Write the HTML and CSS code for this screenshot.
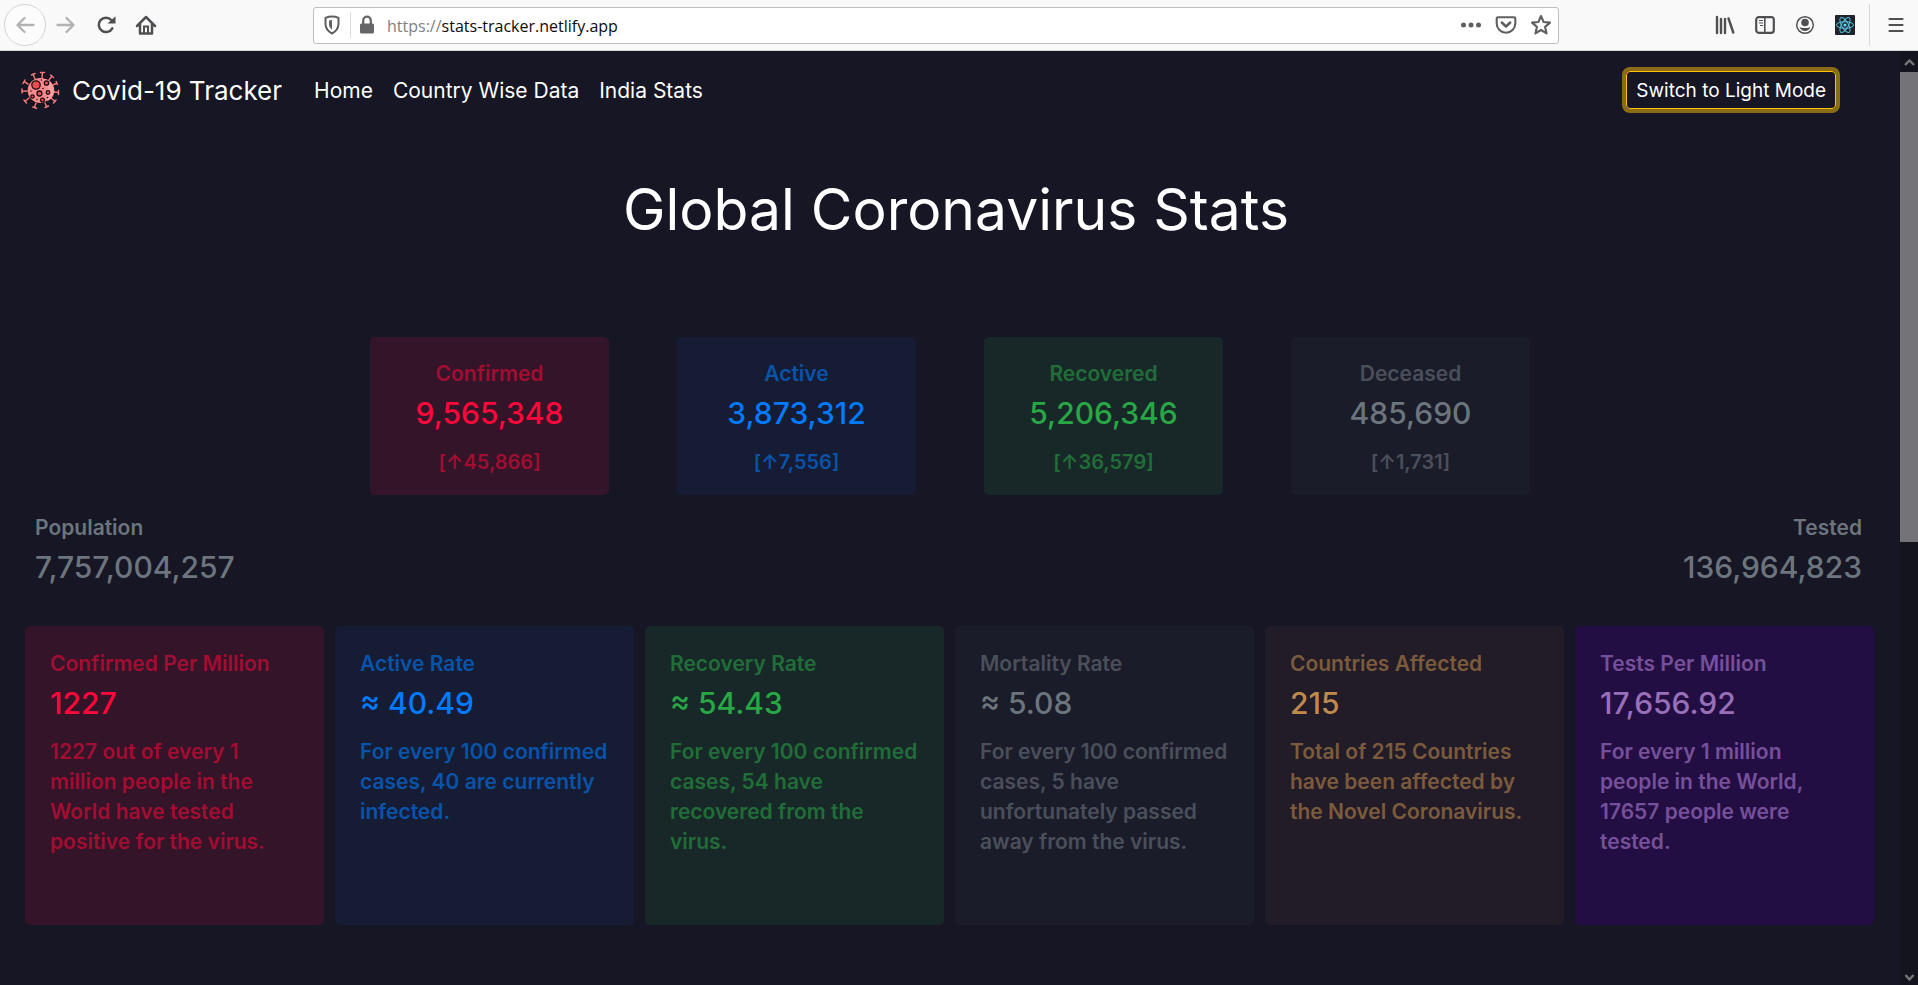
FILE: index.html
```html
<!DOCTYPE html>
<html lang="en">
<head>
<meta charset="utf-8">
<title>Covid-19 Tracker</title>
<link rel="stylesheet" href="styles.css">
</head>
<body>
<header class="toolbar">
  <div class="toolbar-left">
    <button class="tool back" aria-label="Back"><svg width="20" height="20" viewBox="0 0 20 20"><path d="M18.500 10H3M9.500 3L2.500 10l7 7" fill="none" stroke="#b2b2b3" stroke-width="2.300" stroke-linecap="round" stroke-linejoin="round"/></svg></button>
    <button class="tool" aria-label="Forward"><svg width="20" height="20" viewBox="0 0 20 20"><path d="M1.500 10H17M10.500 3l7 7-7 7" fill="none" stroke="#b2b2b3" stroke-width="2.300" stroke-linecap="round" stroke-linejoin="round"/></svg></button>
    <button class="tool" aria-label="Reload"><svg width="20" height="20" viewBox="0 0 20 20"><path d="M16.300 13.300A7.200 7.200 0 1 1 15.300 5" fill="none" stroke="#505052" stroke-width="2.500" stroke-linecap="round"/><path d="M19.500 1.300v7.200h-8z" fill="#505052"/></svg></button>
    <button class="tool" aria-label="Home"><svg width="22" height="22" viewBox="0 0 22 22"><path d="M2 12L11 3l9 9M5 10v9.500h12V10" fill="none" stroke="#505052" stroke-width="2.500" stroke-linecap="round" stroke-linejoin="round"/><path d="M9 19v-6.500h4V19" fill="none" stroke="#505052" stroke-width="2"/></svg></button>
  </div>
  <div class="urlbar">
    <svg class="shield" width="18" height="20" viewBox="0 0 18 20"><path d="M9 1.500c2.600 0 4.700.5 6.500 1.300v6c0 4.500-2.600 7.700-6.500 9.700-3.900-2-6.500-5.200-6.500-9.700v-6C4.300 2 6.400 1.500 9 1.500z" fill="none" stroke="#5f5f61" stroke-width="2"/><path d="M9 5c-1.200 0-2.200.2-3 .5v3.600c0 2.400 1.200 4.400 3 5.700z" fill="#5f5f61"/></svg>
    <span class="url-rule"></span>
    <svg class="lock" width="16" height="20" viewBox="0 0 16 20"><path d="M4.200 9V5.500a3.800 3.800 0 0 1 7.600 0V9" fill="none" stroke="#666668" stroke-width="2.300"/><rect x="1" y="8.500" width="14" height="10" rx="1.500" fill="#666668"/></svg>
    <label class="scheme" for="url">https://</label><input class="url" id="url" type="text" value="stats-tracker.netlify.app">
    <div class="url-actions">
      <button class="tool" aria-label="Page actions"><svg width="22" height="20" viewBox="0 0 22 20"><g fill="#5f5f61"><circle cx="3.500" cy="10" r="2.500"/><circle cx="11" cy="10" r="2.500"/><circle cx="18.500" cy="10" r="2.500"/></g></svg></button>
      <button class="tool" aria-label="Save to Pocket"><svg width="22" height="20" viewBox="0 0 22 20"><path d="M3 2.200h16q1.300 0 1.300 1.300V8.500a9.300 9.300 0 0 1-18.600 0V3.500Q1.700 2.200 3 2.200z" fill="none" stroke="#5f5f61" stroke-width="2.100"/><path d="M6.800 7.500L11 11.500l4.200-4" fill="none" stroke="#5f5f61" stroke-width="2.500" stroke-linecap="round" stroke-linejoin="round"/></svg></button>
      <button class="tool" aria-label="Bookmark this page"><svg width="22" height="22" viewBox="0 0 22 22"><path d="M11 2l2.600 6 6.400.6-4.900 4.300 1.500 6.500L11 16l-5.600 3.400 1.500-6.500L2 8.600 8.400 8z" fill="none" stroke="#5f5f61" stroke-width="2.100" stroke-linejoin="round"/></svg></button>
    </div>
  </div>
  <div class="toolbar-right">
    <button class="tool" aria-label="Library"><svg width="20" height="20" viewBox="0 0 20 20"><path d="M2 2v16M6 4v14M10 4v14M13.500 3.500L18.300 17.500" fill="none" stroke="#505052" stroke-width="2.400" stroke-linecap="round"/></svg></button>
    <button class="tool" aria-label="Sidebars"><svg width="20" height="20" viewBox="0 0 20 20"><rect x="1.200" y="2.200" width="17.600" height="15.600" rx="2.500" fill="none" stroke="#505052" stroke-width="2.200"/><path d="M9.800 3v14" stroke="#505052" stroke-width="1.600"/><path d="M4 5.500h4M4 8h4M5 10.500h3" stroke="#505052" stroke-width="1.200"/></svg></button>
    <button class="tool" aria-label="Account"><svg width="20" height="20" viewBox="0 0 20 20"><circle cx="10" cy="10" r="8.300" fill="none" stroke="#505052" stroke-width="1.500"/><circle cx="10" cy="7.500" r="3.800" fill="#505052"/><path d="M4.500 11.800c1.200 1 3 1.300 5.500 1.300s4.300-.3 5.500-1.300c-.6 2.500-2.800 4.200-5.500 4.200s-4.900-1.700-5.500-4.200z" fill="#505052"/></svg></button>
    <button class="tool" aria-label="React Developer Tools"><svg width="20" height="20" viewBox="0 0 20 20"><rect width="20" height="20" rx="1" fill="#20232a"/><g fill="none" stroke="#61dafb" stroke-opacity=".85"><ellipse cx="10" cy="10" rx="8.500" ry="3.300"/><ellipse cx="10" cy="10" rx="8.500" ry="3.300" transform="rotate(60 10 10)"/><ellipse cx="10" cy="10" rx="8.500" ry="3.300" transform="rotate(120 10 10)"/></g><circle cx="10" cy="10" r="1.600" fill="#61dafb"/></svg></button>
    <span class="toolbar-rule"></span>
    <button class="tool" aria-label="Open menu"><svg width="18" height="18" viewBox="0 0 18 18"><path d="M2.500 3h13M2.500 9h13M2.500 15h13" stroke="#505052" stroke-width="2.200" stroke-linecap="round"/></svg></button>
  </div>
</header>

<div class="viewport">
  <div class="page">
    <nav class="navbar">
      <a class="brand" href="#">
        <svg width="40" height="40" viewBox="0 0 40 40">
          <g stroke="#0d0d14" stroke-width="3.500" stroke-linecap="round" fill="none">
            <path d="M20 20L22 3M20 20L31.500 6.500M20 20L36.500 13.500M20 20L38 22.500M20 20L34.500 31M20 20L26.500 36.500M20 20L14.500 37M20 20L5.500 31.500M20 20L2.500 21M20 20L4.500 11.500M20 20L13 4"/>
          </g>
          <circle cx="20" cy="20.500" r="13" fill="#f78a8c" stroke="#0d0d14" stroke-width="1.200"/>
          <g stroke="#f3797c" stroke-width="1.500" stroke-linecap="round" fill="none">
            <path d="M22 8L22.400 3M20.500 2.500h4M29 10l3-4M30.500 5l3 2.500M33 15l4-2M36.200 11.500l1.200 3M34 22l4 .5M38.500 20.500v4M31 28l4 3.500M33.500 33l2.500-3M25 33l1.700 4M25 37.500l3.500-1.500M16 33l-1.500 4.500M12.800 37l3.700 1.300M9 28l-4 3.500M4 30l2.500 3M7 21l-4.500.2M2 19v4M8 14l-4-2.500M3 13.500l2-3.500M15 9L13 4M11.500 5l3.500-1.500"/>
          </g>
          <path d="M21 8.500a12 12 0 0 1 6 23q6-13-6-23z" fill="#fb9d9e"/>
          <g fill="#ee4c4c" stroke="#1c0d14" stroke-width="1.300"><circle cx="16" cy="15" r="4.200"/><circle cx="26.500" cy="13" r="2.200"/><circle cx="19.500" cy="23.500" r="2.500"/><circle cx="28" cy="22.500" r="1.800"/><circle cx="12.500" cy="26.500" r="1.700"/><circle cx="22.500" cy="30" r="1.900"/></g>
          <g fill="#1c0d14"><circle cx="21.500" cy="10" r=".8"/><circle cx="23" cy="18.500" r=".8"/><circle cx="11" cy="21" r=".8"/><circle cx="27.500" cy="27.500" r=".8"/><circle cx="17" cy="29.500" r=".7"/></g>
        </svg>
        <span>Covid-19 Tracker</span>
      </a>
      <div class="nav-links">
        <a href="#">Home</a>
        <a href="#">Country Wise Data</a>
        <a href="#">India Stats</a>
      </div>
      <button class="mode">Switch to Light Mode</button>
    </nav>

    <main>
      <h1>Global Coronavirus Stats</h1>
      <section class="totals">
        <article class="card total red"><h2>Confirmed</h2><p class="value">9,565,348</p><p class="delta">[↑45,866]</p></article>
        <article class="card total blue"><h2>Active</h2><p class="value">3,873,312</p><p class="delta">[↑7,556]</p></article>
        <article class="card total green"><h2>Recovered</h2><p class="value">5,206,346</p><p class="delta">[↑36,579]</p></article>
        <article class="card total gray"><h2>Deceased</h2><p class="value">485,690</p><p class="delta">[↑1,731]</p></article>
      </section>
      <section class="world">
        <div><h2>Population</h2><p class="value">7,757,004,257</p></div>
        <div class="tested"><h2>Tested</h2><p class="value">136,964,823</p></div>
      </section>
      <section class="rates">
        <article class="card rate red"><h2>Confirmed Per Million</h2><p class="value">1227</p><p class="note">1227 out of every 1 million people in the World have tested positive for the virus.</p></article>
        <article class="card rate blue"><h2>Active Rate</h2><p class="value">≈ 40.49</p><p class="note">For every 100 confirmed cases, 40 are currently infected.</p></article>
        <article class="card rate green"><h2>Recovery Rate</h2><p class="value">≈ 54.43</p><p class="note">For every 100 confirmed cases, 54 have recovered from the<br>virus.</p></article>
        <article class="card rate gray"><h2>Mortality Rate</h2><p class="value">≈ 5.08</p><p class="note">For every 100 confirmed cases, 5 have unfortunately passed away from the virus.</p></article>
        <article class="card rate brown"><h2>Countries Affected</h2><p class="value">215</p><p class="note">Total of 215 Countries have been affected by the Novel Coronavirus.</p></article>
        <article class="card rate purple"><h2>Tests Per Million</h2><p class="value">17,656.92</p><p class="note">For every 1 million people in the World, 17657 people were tested.</p></article>
      </section>
    </main>
  </div>
  <div class="scrollbar" aria-hidden="true">
    <svg class="arrow" width="18" height="21" viewBox="0 0 18 21"><path d="M5 14l4.500-4.500L14 14" fill="none" stroke="#75757b" stroke-width="2.400"/></svg>
    <div class="track"><div class="thumb"></div></div>
    <svg class="arrow" width="18" height="17" viewBox="0 0 18 17"><path d="M5.500 7l4 4.500L13.500 7" fill="none" stroke="#75757b" stroke-width="2.400"/></svg>
  </div>
</div>
</body>
</html>
```
FILE: styles.css
```css
* { box-sizing: border-box; }
body {
  margin: 0;
  min-height: 100vh;
  display: flex;
  flex-direction: column;
  background: #161625;
  font-family: Inter, "Liberation Sans", sans-serif;
  color: #fff;
}
button { font: inherit; cursor: pointer; }
h1, h2, p { margin: 0; }
a { color: inherit; text-decoration: none; }
svg { display: block; flex: none; }

/* Browser toolbar */
.toolbar {
  height: 51px;
  display: flex;
  align-items: center;
  background: #f9f9fa;
  border-bottom: 1px solid #d5d5d8;
}
.tool {
  display: flex;
  align-items: center;
  justify-content: center;
  padding: 0;
  border: 0;
  background: none;
}
.toolbar-left { display: flex; align-items: center; width: 313px; padding-left: 4px; }
.toolbar-left .tool { width: 40px; height: 42px; }
.toolbar-left .back { width: 42px; border: 1px solid #d4d4d6; border-radius: 50%; background: #fcfcfc; }
.urlbar {
  flex: 1;
  height: 37px;
  display: flex;
  align-items: center;
  padding: 0 6px 0 9px;
  background: #fff;
  border: 1px solid #bfbfc1;
  border-radius: 3px;
  font: 16px/24px "Open Sans", sans-serif;
}
.url-rule { width: 1px; height: 26px; margin: 0 8px 0 9px; background: #dcdcde; }
.scheme { margin-left: 12px; padding-top: 2px; color: #808082; }
.url { flex: 1; min-width: 0; padding: 2px 0 0; border: 0; outline: 0; background: none; color: #0c0c0d; font: inherit; }
.url-actions { display: flex; gap: 13px; }
.toolbar-right { width: 359px; display: flex; align-items: center; justify-content: flex-end; gap: 20px; padding-right: 13px; }
.toolbar-rule { width: 1px; height: 42px; margin: 0 -3px 0 -6px; background: #d7d7db; }

/* Page */
.viewport { flex: 1; display: flex; }
.page { flex: 1; min-width: 0; }
.navbar { display: flex; align-items: center; height: 78px; padding: 0 64px 0 20px; }
.brand { display: flex; align-items: center; gap: 12px; font-size: 26px; }
.nav-links { display: flex; gap: 20px; margin-left: 32px; font-size: 21px; }
.mode {
  height: 38px;
  margin-left: auto;
  padding: 0 9px;
  background: transparent;
  border: 1px solid #ffc107;
  border-radius: 4px;
  box-shadow: 0 0 0 4px #8b6c16;
  color: #fff;
  font-size: 19px;
}
h1 { padding: 48px 0 0 12px; font-size: 57px; line-height: 66px; font-weight: 400; text-align: center; }

h2 { font-size: 21px; line-height: 30px; font-weight: 600; color: var(--dim); }
.value { font-size: 30px; line-height: 36px; font-weight: 500; color: var(--main); }
.card { background: var(--bg); border-radius: 5px; }
.red { --main: #ff073a; --dim: #a20d32; --bg: #331428; }
.blue { --main: #007bff; --dim: #0953a8; --bg: #151c33; }
.green { --main: #28a745; --dim: #216d38; --bg: #182829; }
.gray { --main: #6c757d; --dim: #4a4f5a; --bg: #1b1c2a; }
.brown { --main: #c08a4c; --dim: #7c5a3c; --bg: #211c28; }
.purple { --main: #9970b8; --dim: #76509a; --bg: #230e43; }

.totals { display: flex; justify-content: center; gap: 68px; margin-top: 94px; }
.total { width: 239px; height: 158px; padding-top: 22px; text-align: center; }
.total .value { margin-top: 6px; }
.delta { margin-top: 16px; font-size: 20px; line-height: 30px; font-weight: 600; color: var(--dim); }

.world { --main: #6c757d; --dim: #6c757d; display: flex; justify-content: space-between; padding: 18px 38px 0 35px; }
.world .value { margin-top: 6px; }
.tested { text-align: right; }

.rates { display: grid; grid-template-columns: repeat(6, minmax(0, 1fr)); gap: 11px; margin-top: 41px; padding: 0 26px 56px 25px; }
.rate { min-height: 299px; padding: 23px 24px 20px 25px; }
.rate .value { margin-top: 6px; }
.note { margin-top: 16px; font-size: 21px; line-height: 30px; font-weight: 600; color: var(--dim); }

.scrollbar { width: 18px; display: flex; flex-direction: column; background: #14141e; }
.track { flex: 1; }
.thumb { height: 470px; background: #737378; }
```
